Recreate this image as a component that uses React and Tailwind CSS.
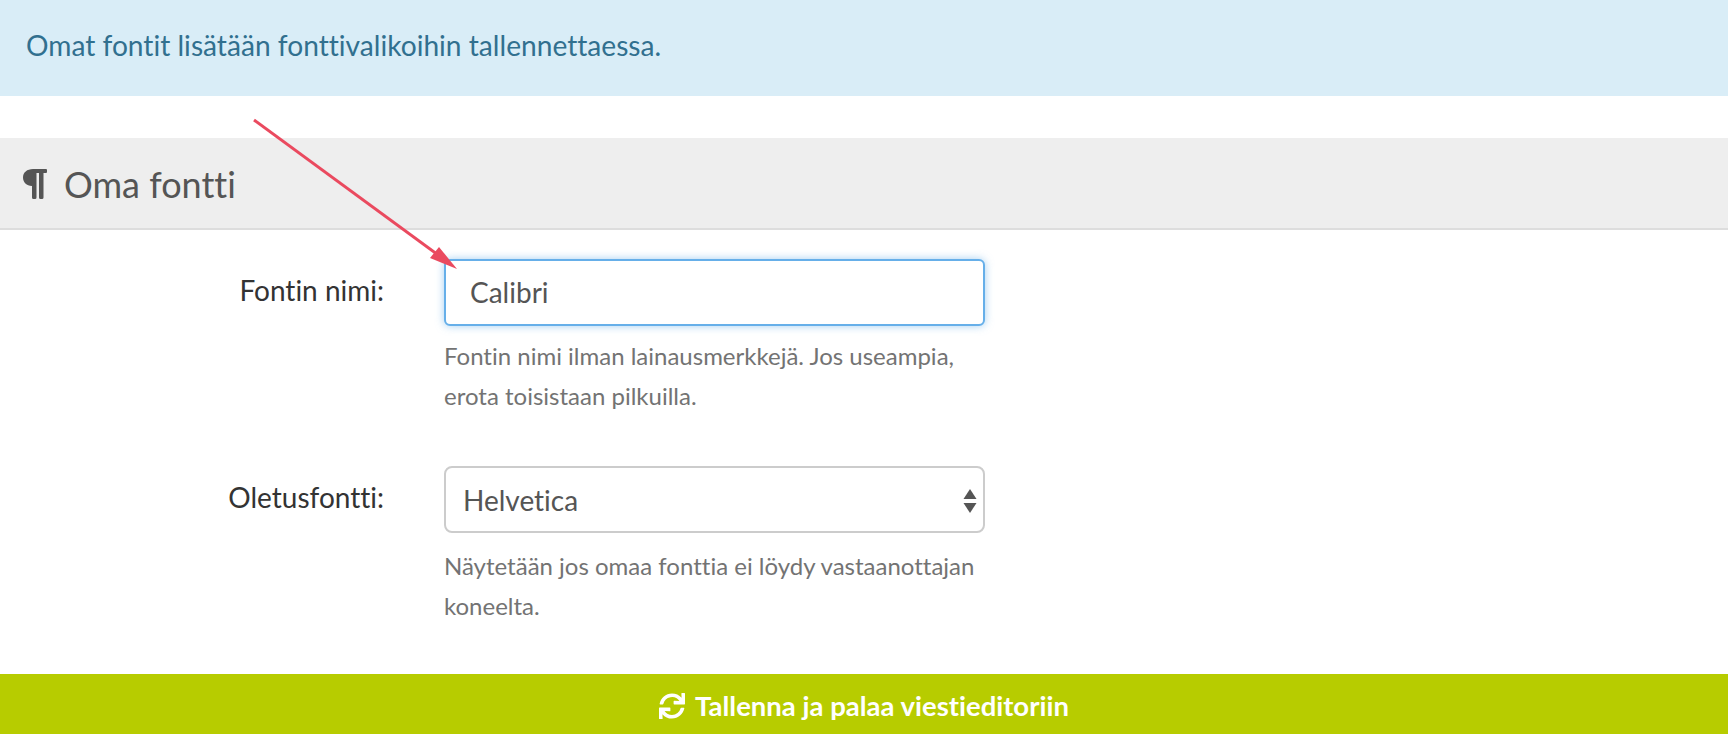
import { FaSync } from 'react-icons/fa';

const lato = { fontFamily: 'Lato, "Open Sans", sans-serif', fontVariantLigatures: 'none' };

function Arrow() {
  return (
    <svg className="absolute left-0 top-0 pointer-events-none" width="500" height="300" viewBox="0 0 500 300">
      <line x1="254" y1="120" x2="445" y2="260" stroke="#ea4a5f" strokeWidth="3" />
      <polygon points="457,269 430,258 439,247" fill="#ea4a5f" />
    </svg>
  );
}

function Pilcrow() {
  return (
    <svg className="mr-[17px]" width="24" height="30" viewBox="0 0 24 30" fill="#555">
      <path d="M10 0 H23 Q24 0 24 1 V3 Q24 4 23 4 H20.5 V28.5 Q20.5 30 19 30 H17.5 Q16 30 16 28.5 V4 H13.5 V28.5 Q13.5 30 12 30 H10.5 Q9 30 9 28.5 V17 C3.5 17 0 13 0 8.5 C0 3.5 4 0 10 0 Z" />
    </svg>
  );
}

function FormRow({ label, help, helpClass, children }) {
  return (
    <div className="grid grid-cols-[384px_541px] gap-x-[60px]">
      <label className="text-right text-[28px] leading-[34px] pt-[14px] text-[#333]">{label}</label>
      <div>
        {children}
        <p className={`${helpClass} text-[24px] leading-[40px] text-[#737373]`}>{help}</p>
      </div>
    </div>
  );
}

export default function App() {
  return (
    <div className="relative h-[734px] overflow-hidden bg-white flex flex-col" style={lato}>
      <div className="h-[96px] bg-[#d9edf7] flex items-center pl-[26px] pb-[6px] text-[28.15px] text-[#31708f]">
        Omat fontit lisätään fonttivalikoihin tallennettaessa.
      </div>

      <div className="mt-[42px] h-[92px] bg-[#eeeeee] border-b-2 border-[#dddddd] flex items-center pl-[23px] pt-[2px] text-[#555] text-[36px]">
        <Pilcrow />
        <span>Oma fontti</span>
      </div>

      <div className="pt-[29px] flex-1">
        <FormRow
          label="Fontin nimi:"
          helpClass="mt-[10px]"
          help={<>Fontin nimi ilman lainausmerkkejä. Jos useampia,<br />erota toisistaan pilkuilla.</>}
        >
          <div className="h-[67px] rounded-[6px] border-2 border-[#66afe9] shadow-[0_0_8px_rgba(102,175,233,0.6)] bg-white flex items-center pl-[24px] pb-[2px] text-[28px] text-[#555]">
            Calibri
          </div>
        </FormRow>

        <div className="h-[50px]" />

        <FormRow
          label="Oletusfontti:"
          helpClass="mt-[13px]"
          help={<>Näytetään jos omaa fonttia ei löydy vastaanottajan<br />koneelta.</>}
        >
          <div className="relative h-[67px] rounded-[8px] border-2 border-[#cccccc] bg-white flex items-center pl-[17px] text-[28px] text-[#555]">
            Helvetica
            <svg className="absolute right-[5px] top-[20px]" width="16" height="26" viewBox="0 0 16 26">
              <polygon points="8,1 14.5,11 1.5,11" fill="#555" />
              <polygon points="8,25 14.5,15 1.5,15" fill="#555" />
            </svg>
          </div>
        </FormRow>
      </div>

      <div className="h-[60px] bg-[#b7cc00] flex items-center justify-center pt-[3px] text-white text-[27.5px] font-bold">
        <FaSync className="w-[26px] h-[26px] mr-[10px]" />
        <span>Tallenna ja palaa viestieditoriin</span>
      </div>

      <Arrow />
    </div>
  );
}
